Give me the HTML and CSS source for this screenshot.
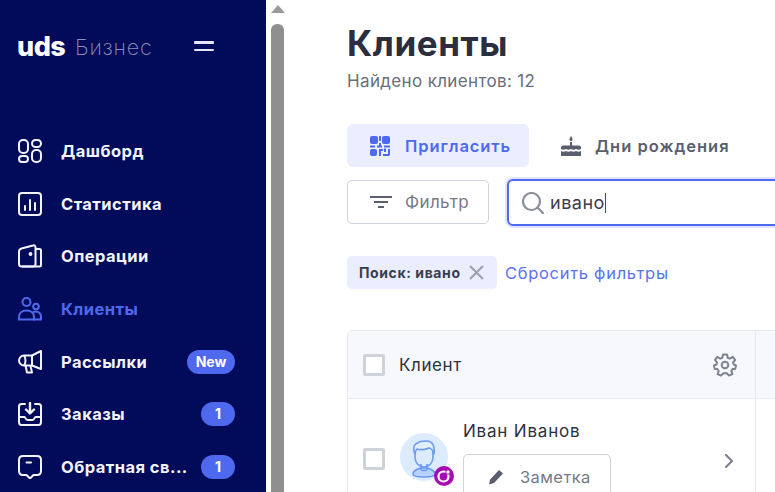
FILE: index.html
```html
<!DOCTYPE html>
<html lang="ru">
<head>
<meta charset="utf-8">
<title>Клиенты</title>
<link rel="stylesheet" href="styles.css">
</head>
<body>
<div class="app">
  <aside class="sidebar">
    <div class="brand">
      <span class="logo">uds</span>
      <span class="brand-sub">Бизнес</span>
      <span class="burger"><i></i><i></i></span>
    </div>
    <nav class="nav">
      <a class="nav-item">
        <svg class="nav-icon" viewBox="0 0 24 24" fill="none" stroke="currentColor" stroke-width="2"><rect x="1" y="1" width="9" height="13" rx="4"/><rect x="14" y="1" width="9" height="7" rx="3.5"/><rect x="1" y="17" width="9" height="6" rx="3"/><rect x="14" y="11" width="9" height="12" rx="4"/></svg>
        <span class="nav-label">Дашборд</span>
      </a>
      <a class="nav-item">
        <svg class="nav-icon" viewBox="0 0 24 24" fill="none" stroke="currentColor" stroke-width="2" stroke-linecap="round"><rect x="1" y="1" width="22" height="22" rx="3"/><path d="M7 14v4M12 8v10M17 11v7"/></svg>
        <span class="nav-label">Статистика</span>
      </a>
      <a class="nav-item">
        <svg class="nav-icon" viewBox="0 0 24 24" fill="none" stroke="currentColor" stroke-width="2" stroke-linejoin="round"><path d="M1 7.500C1 6 2 5 3.500 4.500L15 1.500C16.500 1 17.500 2 17.500 3.500V20C17.500 21.500 16.500 22.500 15 22.500H4C2 22.500 1 21.500 1 20Z"/><path d="M17.500 5H21.500C22.500 5 23 5.500 23 6.500V21C23 22 22.500 22.500 21.500 22.500H4"/><circle cx="12.500" cy="10" r=".9" fill="currentColor"/></svg>
        <span class="nav-label">Операции</span>
      </a>
      <a class="nav-item active">
        <svg class="nav-icon" viewBox="0 0 24 24" fill="none" stroke="currentColor" stroke-width="2"><circle cx="8.500" cy="5" r="4"/><circle cx="18" cy="9.500" r="2.800"/><path d="M1 22.500V20C1 16 4 13.500 8.500 13.500S16 16 16 20V22.500Z"/><path d="M15 15C16 14.500 17 14.500 18 14.500C21 14.500 23 17 23 20V22.500H15.500"/></svg>
        <span class="nav-label">Клиенты</span>
      </a>
      <a class="nav-item">
        <svg class="nav-icon" viewBox="0 0 24 24" fill="none" stroke="currentColor" stroke-width="2" stroke-linejoin="round"><path d="M23 1V19L14 15.500H6C3 15.500 1 13 1 10.500S3 5.500 6 5.500H14Z"/><path d="M14 5.500V15.500M6 5.500C8 8 8 13 6 15.500"/><path d="M7.500 15.500L9 22.500H14L12.500 16"/></svg>
        <span class="nav-label">Рассылки</span>
        <span class="badge">New</span>
      </a>
      <a class="nav-item">
        <svg class="nav-icon" viewBox="0 0 24 24" fill="none" stroke="currentColor" stroke-width="2" stroke-linecap="round" stroke-linejoin="round"><path d="M7 2H3.500C2 2 1 3 1 4.500V20C1 22 2 23 3.500 23H20.500C22 23 23 22 23 20V4.500C23 3 22 2 20.500 2H17"/><path d="M1 15H6.500C7.500 15 7.500 18 9.500 18H14.500C16.500 18 16.500 15 17.500 15H23"/><path d="M12 1V11M8 7.500L12 11.500L16 7.500" stroke-width="2.400"/></svg>
        <span class="nav-label">Заказы</span>
        <span class="badge count">1</span>
      </a>
      <a class="nav-item">
        <svg class="nav-icon" viewBox="0 0 24 24" fill="none" stroke="currentColor" stroke-width="2" stroke-linecap="round" stroke-linejoin="round"><path d="M5 1H19C21.500 1 23 2.500 23 5V16C23 18.500 21.500 20 19 20H15.500L12 23.500L8.500 20H5C2.500 20 1 18.500 1 16V5C1 2.500 2.500 1 5 1Z"/><path d="M8.500 7.500H13"/></svg>
        <span class="nav-label">Обратная св...</span>
        <span class="badge count">1</span>
      </a>
    </nav>
  </aside>

  <div class="scrollbar">
    <span class="scroll-arrow"></span>
    <span class="scroll-thumb"></span>
  </div>

  <main class="content">
    <h1 class="title">Клиенты</h1>
    <p class="found">Найдено клиентов: 12</p>

    <div class="tabs">
      <a class="tab tab-active">
        <svg class="tab-icon" viewBox="0 0 20 20" fill="currentColor"><rect x="0" y="0" width="8" height="8" rx="2"/><rect x="12" y="0" width="8" height="8" rx="2"/><rect x="0" y="13" width="7" height="7" rx="2"/><path d="M9 0H11V5H9ZM0 9.500H5V11.500H0ZM7 9.500H12V11.500H7ZM9 7H11V11H9ZM14 9.500H20V11.500H14ZM9 13H13V15H11V20H9ZM14 12.500H16V16H14ZM18 13H20V18C20 19.500 19 20 18 20H13V18H18Z"/></svg>
        <span>Пригласить</span>
      </a>
      <a class="tab">
        <svg class="tab-icon" viewBox="0 0 20 20" fill="currentColor"><path d="M10 0C11 1.500 11.500 2.500 11.500 3.500A1.500 1.500 0 0 1 8.500 3.500C8.500 2.500 9 1.500 10 0Z"/><rect x="9" y="6" width="2" height="4"/><path d="M2 9.500H18C19 9.500 20 10.500 20 11.500V13C18.500 14 17 14 15 13C13.500 14 11.500 14 10 13C8.500 14 6.500 14 5 13C3 14 1.500 14 0 13V11.500C0 10.500 1 9.500 2 9.500Z"/><path d="M0 15C2 16 3.500 16 5 15C6.500 16 8.500 16 10 15C11.500 16 13.500 16 15 15C16.500 16 18 16 20 15V20H0Z"/></svg>
        <span>Дни рождения</span>
      </a>
    </div>

    <div class="toolbar">
      <button class="filter-btn">
        <svg class="filter-icon" viewBox="0 0 22 14" fill="none" stroke="currentColor" stroke-width="2"><path d="M0 2H22M4 7H18M8 12H14"/></svg>
        <span>Фильтр</span>
      </button>
      <div class="search">
        <svg class="search-icon" viewBox="0 0 22 22" fill="none" stroke="currentColor" stroke-width="2.200" stroke-linecap="round"><circle cx="9.500" cy="9.500" r="8.500"/><path d="M15.500 15.500L21 21"/></svg>
        <span class="search-value">ивано</span><span class="caret"></span>
      </div>
    </div>

    <div class="chips">
      <span class="chip">
        <span>Поиск: ивано</span>
        <svg class="chip-x" viewBox="0 0 14 14" fill="none" stroke="currentColor" stroke-width="2"><path d="M1 1L13 13M13 1L1 13"/></svg>
      </span>
      <a class="reset">Сбросить фильтры</a>
    </div>

    <section class="table">
      <div class="thead">
        <div class="cell-client head-cell">
          <span class="check"></span>
          <span class="head-label">Клиент</span>
          <svg class="gear" viewBox="0 0 24 24" fill="none" stroke="currentColor" stroke-width="2" stroke-linejoin="round"><circle cx="12" cy="12" r="3.300"/><path d="M10 1.500H14L14.700 4.800L16.800 5.700L19.700 3.900L22.100 6.900L20 9.500L20.800 11.500L23 12.500L22.300 15.900L19.500 16L18.300 18L19.400 21L16 22.600L14 20.300H10.500L8 22.600L4.600 21L5.700 18L4.300 16L1.700 15.900L1 12.500L3.500 11.500L4 9.500L2 6.900L4.300 3.900L7.200 5.700L9.300 4.800Z"/></svg>
        </div>
        <div class="cell-rest"></div>
      </div>
      <div class="row">
        <div class="cell-client row-cell">
          <span class="check row-check"></span>
          <div class="avatar">
            <svg class="avatar-art" viewBox="0 0 48 48" fill="none" stroke="#6d9bf1" stroke-width="1.600" stroke-linejoin="round"><path d="M13 41C13 37 18 36 21 35H27C30 36 35 37 35 41C35 43 33 44 24 44S13 43 13 41Z" fill="#b7d3fb"/><path d="M21 31V36C21 38 27 38 27 36V31"/><path d="M15 18V24C15 30 19 34 24 34S33 30 33 24V18"/><path d="M15 21C13 17 13 11 18 10C19 8 24 8 27 8C32 8 35 12 34 21C33 18 31 15 29 15C25 17 19 17 17 16C16 17 15 19 15 21Z" fill="#e1eefe"/></svg>
            <svg class="avatar-mark" viewBox="0 0 20 20"><circle cx="10" cy="10" r="10" fill="#a60cb2"/><circle cx="9.500" cy="10.500" r="5" fill="none" stroke="#fff" stroke-width="2.200"/><circle cx="14" cy="6" r="2.200" fill="#fff" stroke="#a60cb2"/></svg>
          </div>
          <div class="person">
            <span class="person-name">Иван Иванов</span>
            <button class="note-btn">
              <svg class="note-icon" viewBox="0 0 16 16" fill="currentColor"><path d="M11 1L15 4.500L6 14L1 15.500L2.200 10.500Z"/></svg>
              <span>Заметка</span>
            </button>
          </div>
          <svg class="chevron" viewBox="0 0 10 16" fill="none" stroke="currentColor" stroke-width="2.200" stroke-linecap="round" stroke-linejoin="round"><path d="M2 2L8 8L2 14"/></svg>
        </div>
        <div class="cell-rest"></div>
      </div>
    </section>
  </main>
</div>
</body>
</html>
```

FILE: styles.css
```css
* { box-sizing: border-box; }

html, body {
  margin: 0;
  height: 492px;
  overflow: hidden;
  background: #fff;
}

body {
  font-family: Inter, "Noto Sans", "Liberation Sans", sans-serif;
  color: #2d3040;
}

.app {
  display: flex;
  width: 775px;
  height: 492px;
  overflow: hidden;
}

/* Sidebar */
.sidebar {
  flex: 0 0 266px;
  background: #020b5a;
  padding: 26px 31px 0 18px;
  color: #fff;
}

.brand {
  display: flex;
  align-items: center;
  height: 40px;
}

.logo {
  font-size: 27px;
  font-weight: 800;
  letter-spacing: -0.5px;
  width: 57px;
  margin-left: -1px;
  margin-right: 1px;
}

.brand-sub {
  font-size: 21.500px;
  font-weight: 200;
  color: #8d91b8;
  width: 119px;
  letter-spacing: .8px;
  padding-top: 2px;
}

.burger {
  display: flex;
  flex-direction: column;
  gap: 5px;
  width: 20px;
}

.burger i {
  display: block;
  height: 2.500px;
  background: #e4e6f5;
  border-radius: 1px;
}

.nav {
  margin-top: 73px;
  display: flex;
  flex-direction: column;
  gap: 28.700px;
}

.nav-item {
  display: flex;
  align-items: center;
  height: 24px;
  color: #f2f3fc;
}

.nav-item.active { color: #4f69ee; }

.nav-icon {
  flex: 0 0 24px;
  width: 24px;
  height: 24px;
  margin-right: 19px;
}

.nav-label {
  flex: 1;
  font-size: 16.500px;
  font-weight: 700;
  letter-spacing: .45px;
  white-space: nowrap;
}

.badge {
  background: #4f69ee;
  color: #fff;
  font-size: 14px;
  font-weight: 700;
  line-height: 23px;
  height: 24px;
  border-radius: 12px;
  text-align: center;
  width: 48px;
}

.badge.count { width: 34px; }

/* Browser scrollbar */
.scrollbar {
  flex: 0 0 23px;
  padding-top: 5px;
  background: #fff;
  display: flex;
  flex-direction: column;
  align-items: center;
}

.scroll-arrow {
  width: 0;
  height: 0;
  border-left: 7.500px solid transparent;
  border-right: 7.500px solid transparent;
  border-bottom: 8px solid #9a9a9a;
}

.scroll-thumb {
  margin-top: 11px;
  flex: 1;
  width: 13px;
  background: #8f8f8f;
  border-radius: 6px 6px 0 0;
}

/* Content */
.content {
  flex: 1;
  min-width: 0;
  padding: 22px 0 0 58px;
}

.title {
  margin: 0;
  font-size: 35px;
  line-height: 42px;
  font-weight: 700;
  letter-spacing: .55px;
  color: #2b2e3c;
}

.found {
  margin: 7px 0 0;
  font-size: 17px;
  line-height: 20px;
  letter-spacing: .35px;
  color: #6a6d7c;
}

.tabs {
  display: flex;
  gap: 32px;
  margin-top: 33px;
}

.tab {
  display: flex;
  align-items: center;
  gap: 14px;
  height: 43px;
  font-size: 16.500px;
  font-weight: 600;
  letter-spacing: 1px;
  color: #5b5e6e;
  white-space: nowrap;
}

.tab-active {
  width: 182px;
  gap: 15px;
  padding-left: 23px;
  background: #ebeefe;
  border-radius: 6px;
  letter-spacing: .9px;
  color: #4f69ee;
}

.tab-icon {
  width: 20px;
  height: 20px;
  flex: none;
}

.toolbar {
  display: flex;
  align-items: flex-start;
  gap: 18px;
  margin-top: 13px;
  width: 500px;
}

.filter-btn {
  display: flex;
  align-items: center;
  gap: 13px;
  width: 142px;
  height: 44px;
  padding: 0 0 0 22px;
  background: #fff;
  border: 1px solid #cfd3e0;
  border-radius: 5px;
  font: inherit;
  font-size: 17px;
  letter-spacing: .4px;
  color: #767986;
}

.filter-icon {
  width: 22px;
  height: 14px;
  color: #5b5e6e;
}

.search {
  display: flex;
  align-items: center;
  flex: 1;
  height: 47px;
  margin-top: -1px;
  padding-left: 13px;
  border: 2px solid #4f69ee;
  border-radius: 6px;
  box-shadow: 0 0 0 2px #dfe4fc;
  font-size: 18px;
  letter-spacing: .5px;
  color: #3a3d4c;
}

.search-icon {
  width: 22px;
  height: 22px;
  color: #8b8e9c;
  margin-right: 6px;
}

.caret {
  width: 1px;
  height: 20px;
  background: #2f49d0;
}

.chips {
  display: flex;
  align-items: center;
  gap: 8px;
  margin-top: 30px;
}

.chip {
  display: flex;
  align-items: center;
  gap: 8px;
  width: 150px;
  height: 33px;
  padding-left: 12px;
  background: #ebeefe;
  border-radius: 5px;
  font-size: 14px;
  font-weight: 700;
  letter-spacing: .6px;
  color: #3a3d4c;
  white-space: nowrap;
}

.chip-x {
  width: 15px;
  height: 15px;
  flex: none;
  color: #9da0ad;
}

.reset {
  font-size: 16.500px;
  letter-spacing: .7px;
  color: #5a72ef;
  white-space: nowrap;
}

.table {
  margin-top: 41px;
  width: 500px;
  border: 1px solid #e8eaf2;
  border-bottom: 0;
  border-radius: 5px 0 0 0;
  height: 200px;
}

.thead, .row { display: flex; }

.thead {
  height: 68px;
  background: #f7f8fc;
  border-bottom: 1px solid #e8eaf2;
}

.cell-client {
  display: flex;
  align-items: center;
  flex: 0 0 408px;
  padding-left: 15px;
  border-right: 1px solid #e8eaf2;
}

.cell-rest { flex: 1; }

.check {
  flex: none;
  width: 22px;
  height: 22px;
  border: 3px solid #cfd2db;
  border-radius: 2px;
  background: #fff;
}

.head-label {
  flex: 1;
  margin-left: 14px;
  font-size: 17px;
  letter-spacing: .6px;
  color: #2d3040;
}

.gear {
  width: 24px;
  height: 24px;
  margin-right: 18px;
  color: #7f828f;
}

.row { height: 131px; }

.row-cell { align-items: flex-start; }

.row-check { margin-top: 49px; }

.avatar {
  position: relative;
  flex: none;
  width: 48px;
  height: 48px;
  margin: 34px 0 0 15px;
  border-radius: 50%;
  background: #dcebfe;
}

.avatar-art {
  width: 48px;
  height: 48px;
  display: block;
}

.avatar-mark {
  position: absolute;
  right: -6px;
  bottom: -5px;
  width: 20px;
  height: 20px;
}

.person {
  margin: 20px 0 0 15px;
  flex: 1;
}

.person-name {
  display: block;
  font-size: 17px;
  line-height: 24px;
  letter-spacing: .8px;
  color: #2d3040;
}

.note-btn {
  display: flex;
  align-items: center;
  gap: 16px;
  width: 148px;
  height: 46px;
  margin-top: 11px;
  padding: 0 0 0 24px;
  background: #fff;
  border: 1px solid #cfd3e0;
  border-radius: 5px;
  font: inherit;
  font-size: 16.500px;
  letter-spacing: .4px;
  color: #767986;
}

.note-icon {
  width: 16px;
  height: 16px;
  color: #5b5e6e;
}

.chevron {
  width: 10px;
  height: 16px;
  margin: 54px 21px 0 0;
  color: #7f828f;
}
```
